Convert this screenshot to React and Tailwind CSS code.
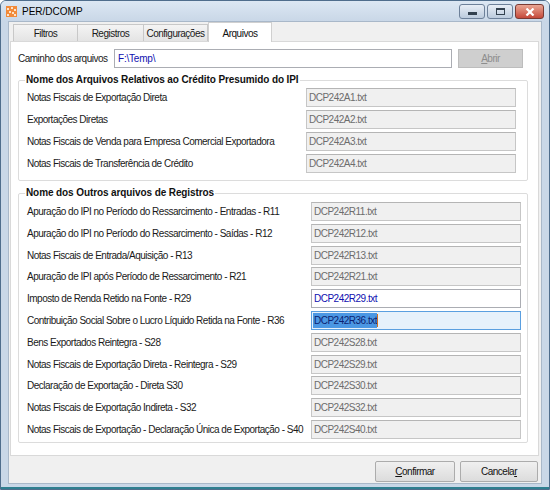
import React from "react";

const creditoRows = [
  ["Notas Fiscais de Exportação Direta", "DCP242A1.txt"],
  ["Exportações Diretas", "DCP242A2.txt"],
  ["Notas Fiscais de Venda para Empresa Comercial Exportadora", "DCP242A3.txt"],
  ["Notas Fiscais de Transferência de Crédito", "DCP242A4.txt"],
];

const registroRows = [
  ["Apuração do IPI no Período do Ressarcimento - Entradas - R11", "DCP242R11.txt"],
  ["Apuração do IPI no Período do Ressarcimento - Saídas - R12", "DCP242R12.txt"],
  ["Notas Fiscais de Entrada/Aquisição - R13", "DCP242R13.txt"],
  ["Apuração de IPI após Período de Ressarcimento - R21", "DCP242R21.txt"],
  ["Imposto de Renda Retido na Fonte - R29", "DCP242R29.txt", "active"],
  ["Contribuição Social Sobre o Lucro Líquido Retida na Fonte - R36", "DCP242R36.txt", "focus"],
  ["Bens Exportados Reintegra - S28", "DCP242S28.txt"],
  ["Notas Fiscais de Exportação Direta - Reintegra - S29", "DCP242S29.txt"],
  ["Declaração de Exportação - Direta S30", "DCP242S30.txt"],
  ["Notas Fiscais de Exportação Indireta - S32", "DCP242S32.txt"],
  ["Notas Fiscais de Exportação - Declaração Única de Exportação - S40", "DCP242S40.txt"],
];

function Field({ value, state }) {
  if (state === "active") {
    return (
      <div className="w-[210px] h-[19px] flex items-center pl-[2px] bg-white border border-[#abadb3] text-[#1010b0]">
        {value}
      </div>
    );
  }
  if (state === "focus") {
    return (
      <div className="w-[210px] h-[19px] flex items-center pl-[1px] bg-[#e6f1fb] border border-[#5a9fe0]">
        <span className="bg-[#4b97e3] text-[#0d1f70] leading-[15px] pl-[1px]">{value}</span>
        <span className="w-[1px] h-[13px] bg-[#d07020]" />
      </div>
    );
  }
  return (
    <div className="w-[210px] h-[19px] flex items-center pl-[2px] bg-[#f0f0f0] border border-[#c6c6c6] border-t-[#b5b5b5] text-[#6d6d6d]">
      {value}
    </div>
  );
}

function Tab({ label, width, selected }) {
  if (selected) {
    return (
      <div
        className={`${width} h-[20px] -mb-[1px] relative z-10 bg-white border border-b-0 border-[#d0d0d0] flex items-start justify-center pt-[3px] text-[#111]`}
      >
        {label}
      </div>
    );
  }
  return (
    <div
      className={`${width} h-[17px] bg-gradient-to-b from-[#f4f4f4] to-[#e4e4e4] border border-b-0 border-[#c8c8c8] -ml-[1px] first:ml-0 flex items-center justify-center text-[#1a1a1a]`}
    >
      {label}
    </div>
  );
}

function Group({ title, rows, pr, gap, pt, pb, className }) {
  return (
    <fieldset
      className={`ml-[7px] mr-[10px] border border-[#dcdcdc] rounded-[2px] pl-[8px] ${pr} ${pb} ${className}`}
    >
      <legend className="-ml-[2px] px-[1px] font-bold tracking-[-0.1px] text-[#111] leading-[12px]">
        {title}
      </legend>
      <div className={`flex flex-col ${gap} ${pt}`}>
        {rows.map(([label, file, state]) => (
          <div key={file} className="flex items-center justify-between h-[19px]">
            <span className="text-[#1a1a1a]">{label}</span>
            <Field value={file} state={state} />
          </div>
        ))}
      </div>
    </fieldset>
  );
}

export default function App() {
  return (
    <div className="w-[550px] h-[490px] flex flex-col bg-[#c9d7e7] border border-[#4f6d8c] rounded-t-[6px] font-['Liberation_Sans',sans-serif] text-[10px] tracking-[-0.5px] overflow-hidden">
      {/* title bar */}
      <div className="h-[20px] flex items-start bg-gradient-to-b from-[#dce7f3] to-[#c9d7e7]">
        <div className="flex items-center pl-[5px] pt-[3px] gap-[5px]">
          <svg width="11" height="11" viewBox="0 0 11 11">
            <rect width="11" height="11" fill="#f28a3a" />
            <path d="M1 2h2v2H1zM5 1h2v2H5zM8 3h2v2H8zM3 5h2v2H3zM6 6h2v2H6zM1 8h2v2H1zM8 8h2v2H8z" fill="#fde3c8" />
          </svg>
          <span className="text-[10px] tracking-normal text-black">PER/DCOMP</span>
        </div>
        <div className="ml-auto flex items-start pt-[3px] pr-[5px] gap-[2px]">
          <div className="w-[26px] h-[15px] rounded-[3px] border border-[#6d8099] bg-gradient-to-b from-[#e8eef6] to-[#bccbdd] flex items-center justify-center">
            <div className="w-[9px] h-[3px] bg-[#33414f] mt-[4px]" />
          </div>
          <div className="w-[26px] h-[15px] rounded-[3px] border border-[#6d8099] bg-gradient-to-b from-[#e8eef6] to-[#bccbdd] flex items-center justify-center">
            <div className="w-[9px] h-[7px] border border-[#33414f] border-t-2" />
          </div>
          <div className="w-[29px] h-[15px] rounded-[3px] border border-[#7a3a33] bg-gradient-to-b from-[#e9a594] to-[#c4483a] flex items-center justify-center">
            <svg width="10" height="8" viewBox="0 0 10 8">
              <path d="M1.5 0.5L8.5 7.5M8.5 0.5L1.5 7.5" stroke="#fff" strokeWidth="2.2" />
            </svg>
          </div>
        </div>
      </div>

      {/* client area */}
      <div className="ml-[7px] mr-[7px] h-[463px] bg-[#f0f0f0] border border-[#a9b8c9] flex flex-col">
        <div className="h-[19px] flex items-end pl-[4px]">
          <Tab label="Filtros" width="w-[65px]" />
          <Tab label="Registros" width="w-[67px]" />
          <Tab label="Configurações" width="w-[65px]" />
          <Tab label="Arquivos" width="w-[64px]" selected />
        </div>

        <div className="ml-[1px] mr-[2px] h-[415px] bg-white border border-[#d9d9d9] flex flex-col">
          <div className="flex items-center pl-[7px] pt-[7px]">
            <span className="w-[96px] text-[#1a1a1a]">Caminho dos arquivos</span>
            <div className="w-[338px] h-[19px] flex items-center pl-[3px] bg-white border border-[#abadb3] text-[#1010b0] tracking-[-0.2px]">
              F:\Temp\
            </div>
            <button className="ml-[6px] w-[65px] h-[19px] bg-[#cfcfcf] border border-[#bdbdbd] text-[#8d8d8d]">
              <span className="underline">A</span>brir
            </button>
          </div>

          <Group
            title="Nome dos Arquivos Relativos ao Crédito Presumido do IPI"
            rows={creditoRows}
            pr="pr-[11px]"
            gap="gap-[3px]"
            pt="pt-[2px]"
            pb="pb-[7px]"
            className="mt-[6px]"
          />

          <Group
            title="Nome dos Outros arquivos de Registros"
            rows={registroRows}
            pr="pr-[6px]"
            gap="gap-[2.8px]"
            pt="pt-[3px]"
            pb="pb-[3px]"
            className="mt-[6px]"
          />
        </div>

        <div className="flex justify-end gap-[5px] mt-[5px] pr-[3px]">
          <button className="w-[80px] h-[21px] bg-gradient-to-b from-[#f0f0f0] to-[#dcdcdc] border border-[#acacac] rounded-[2px] text-[#111]">
            <span className="underline">C</span>onfirmar
          </button>
          <button className="w-[78px] h-[21px] bg-gradient-to-b from-[#f0f0f0] to-[#dcdcdc] border border-[#acacac] rounded-[2px] text-[#111]">
            Cancela<span className="underline">r</span>
          </button>
        </div>
      </div>
      <div className="flex-1 border-b-2 border-[#2f7f90]" />
    </div>
  );
}
